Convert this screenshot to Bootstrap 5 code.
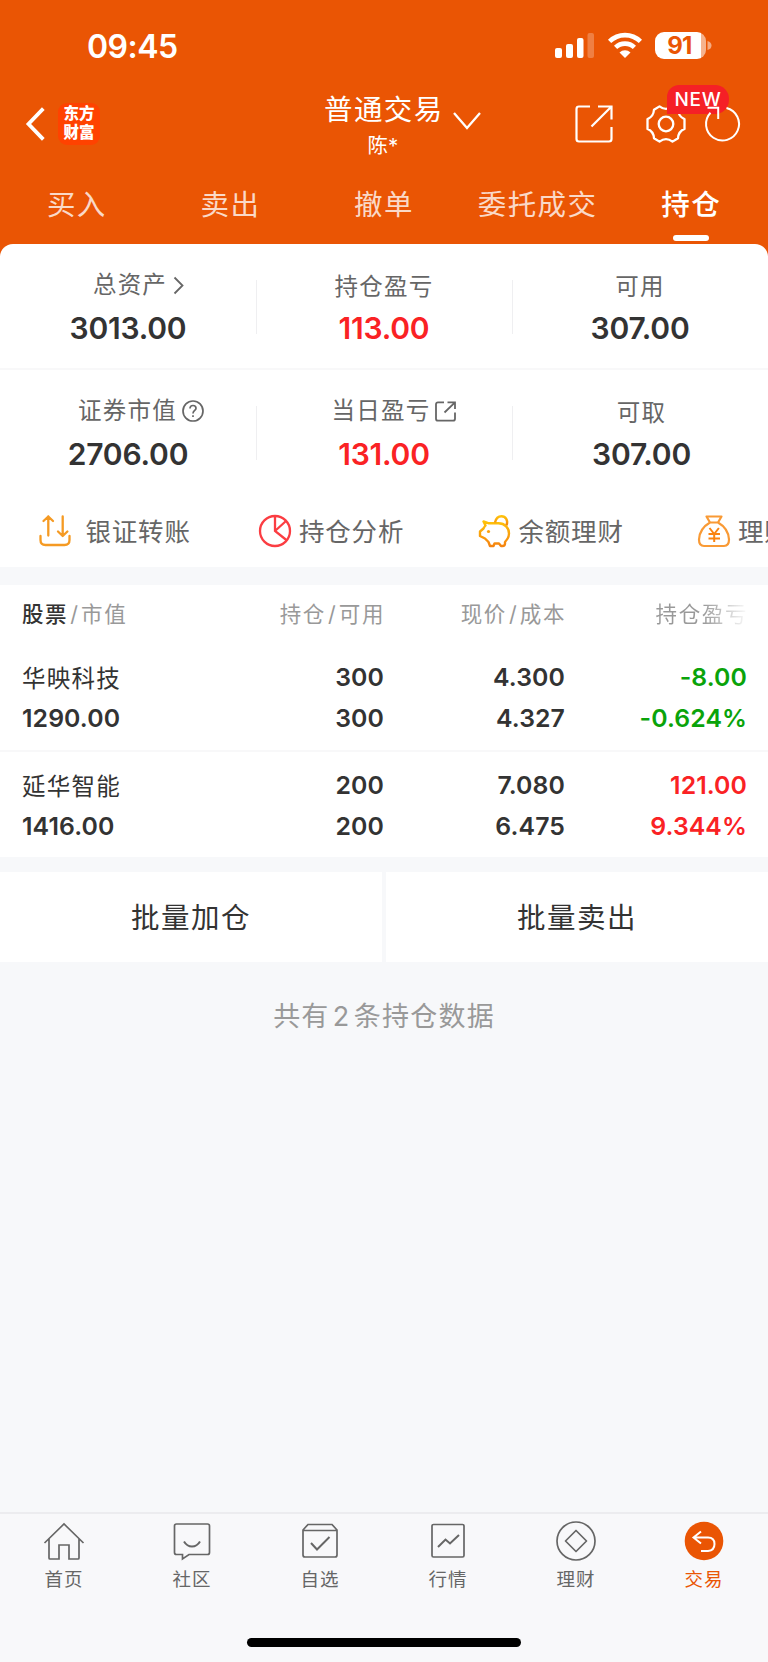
<!DOCTYPE html>
<html lang="zh-CN">
<head>
<meta charset="utf-8">
<meta name="viewport" content="width=device-width, initial-scale=1">
<title>持仓</title>
<link rel="stylesheet" href="https://cdn.jsdelivr.net/npm/bootstrap@5.3.0/dist/css/bootstrap.min.css">
<style>
:root{--brand:#ea5504;--ink:#333;--gray:#666;--mute:#999;--up:#fa2224;--down:#0aa30a;--bg:#f7f8fa}
html,body{height:1662px;overflow:hidden}
body{font-family:Inter,"Noto Sans CJK SC",sans-serif;background:var(--bg);color:var(--ink);width:768px}
svg{display:block;flex:none;fill:none;overflow:visible}
.app{height:1662px}
.top{background:var(--brand);height:256px;color:#fff}
.status{height:86px;padding:5px 55px 0 87px}
.clock{font-size:32px;font-weight:600;letter-spacing:-.5px;line-height:1;padding-top:2px}
.batt{width:51px;height:27px;border-radius:9px;background:linear-gradient(90deg,#fff 46px,#ffffff8c 46px);color:var(--brand);font-size:24px;font-weight:700;line-height:28px;letter-spacing:-.8px;padding-right:2px}
.titlebar{height:76px;padding:0 28px 0 26px}
.logo{width:42px;height:42px;border-radius:9px;background:#ff4200;font-size:15.5px;font-weight:900;line-height:18.500px;margin-left:14px;padding-top:2px}
.title{width:118px;margin-left:224px}
.t1{font-size:28.5px;letter-spacing:1.4px;line-height:36px;white-space:nowrap;padding-top:6px}
.t2{font-size:20.5px;line-height:30px;padding-top:3px}
.newtag{left:21px;top:-20px;width:62px;height:29px;border-radius:12px 14px 14px 0;background:#f52026;font-size:19px;font-weight:500;line-height:29px;letter-spacing:.7px}
.tabs a{font-size:28.5px;letter-spacing:1.4px;line-height:44px;color:#ffffffc8;text-decoration:none;height:82px;padding-top:21px}
.tabs a.on{color:#fff;font-weight:500}
.tabs a.on::after{content:"";width:36px;height:6px;border-radius:3px;background:#fff;margin-top:8px}
.sheet{background:#fff;border-radius:13px 13px 0 0;margin-top:-12px;height:323px}
.stat{height:126px;border-bottom:2px solid #f8f8f9}
.stat.last{border:0;height:125px}
.cell{height:125px;position:relative}
.cell+.cell::before{content:"";position:absolute;left:0;top:36px;width:1px;height:54px;background:#efeff1}
.lab{font-size:23.5px;letter-spacing:1.2px;color:var(--gray);line-height:34px;height:34px;margin-top:26px}
.lab.ic{margin-top:24px;margin-bottom:8px}
.val{font-size:30px;font-weight:600;line-height:36px;letter-spacing:-.2px;margin-top:6px}
.up{color:var(--up)}.down{color:var(--down)}
.quick{height:72px;overflow:hidden;padding-left:39px}
.quick>div{width:219.5px;flex:none;font-size:25.5px;letter-spacing:.8px;color:var(--gray);white-space:nowrap}
.quick span{padding:2px 0 0 8.500px}
.holdings{background:#fff;margin-top:18px;height:272px}
.line4{padding:0 21px 0 22px;display:grid;grid-template-columns:181px 181px 181px 182px;text-align:right;align-content:start}
.line4>:first-child{text-align:left}
.hd{height:58px;line-height:59px;font-size:21.5px;letter-spacing:1.6px;color:var(--mute)}
.hd span{margin-right:-1px}
.hd i{font-style:normal;margin:0 1.500px 0 2px}
.hd .last{background:linear-gradient(90deg,var(--mute) 138px,#99999900 184px);-webkit-background-clip:text;background-clip:text;color:transparent;white-space:nowrap}
.pos{height:107px;padding-top:14px;font-size:24.8px;font-weight:600;letter-spacing:.1px;line-height:41px}
.pos+.pos{border-top:2px solid #f8f8f9;padding-top:13px}
.nm{font-size:23.5px;font-weight:400;letter-spacing:1.25px;padding-top:1px;height:41px}
.batch{margin-top:15px;height:90px;gap:4px}
.batch a{background:#fff;color:var(--ink);text-decoration:none;font-size:28.5px;letter-spacing:1.5px;padding-top:2px}
.total{font-size:27px;letter-spacing:1.2px;word-spacing:-5.500px;color:var(--mute);line-height:40px;margin-top:35px}
.dock{height:150px;background:#f8f8fa;border-top:2px solid #ececef}
.dock a{color:var(--gray);text-decoration:none;font-size:18.5px;letter-spacing:1px;line-height:26px;padding-top:7px}
.dock a svg{margin-bottom:5px}
.dock a.on{color:var(--brand)}
.homebar{width:274px;height:9px;border-radius:5px;background:#000;margin-bottom:15px}
</style>
</head>
<body>
<div class="app d-flex flex-column">
  <header class="top flex-shrink-0">
    <div class="status d-flex align-items-center">
      <div class="clock me-auto">09:45</div>
      <svg width="40" height="26" viewBox="0 0 40 26"><g fill="#fff"><rect x="0" y="15" width="7" height="10" rx="2"/><rect x="11" y="11" width="7" height="14" rx="2"/><rect x="22" y="5" width="6.5" height="20" rx="2"/><rect x="32.500" y="0" width="6.500" height="25" rx="2" opacity=".25"/></g></svg>
      <svg style="margin:0 13px" width="34" height="25" viewBox="0 0 34 25"><g stroke="#fff" stroke-width="4.600"><path d="M1.600 8.400a22 22 0 0 1 30.800 0"/><path d="M7.600 14.400a13.500 13.500 0 0 1 18.800 0"/></g><path fill="#fff" d="M17 25l-5.500-5.500a8 8 0 0 1 11 0z"/></svg>
      <div class="batt text-center">91</div>
      <svg style="margin-left:3px" width="4" height="9" viewBox="0 0 4 9"><path d="M-1.500 0q4 1 4 4.500t-4 4.500z" fill="#fff" opacity=".5"/></svg>
    </div>
    <div class="titlebar d-flex align-items-center">
      <svg width="18" height="32" viewBox="0 0 18 32"><path d="M16 2L2.500 16 16 30" stroke="#fff" stroke-width="3.800" stroke-linecap="square"/></svg>
      <div class="logo text-center">东方<br>财富</div>
      <div class="title text-center align-self-start"><div class="t1">普通交易</div><div class="t2">陈*</div></div>
      <svg style="margin:-7px 0 0 11px" width="28" height="18" viewBox="0 0 28 18"><path d="M1 1l13 15L27 1" stroke="#fff" stroke-width="2.300"/></svg>
      <svg class="ms-auto" width="38" height="38" viewBox="0 0 38 38"><g stroke="#fff" stroke-width="2.200"><path d="M15 1.500H4Q1.500 1.500 1.500 4V34Q1.500 36.500 4 36.500H34Q36.500 36.500 36.500 34V22"/><path d="M23 1.500H36.500V14.500M36.500 1.500L16.500 21.500"/></g></svg>
      <div class="position-relative" style="margin-left:33px">
        <svg width="40" height="38" viewBox="-20 -19 40 38"><g stroke="#fff" stroke-width="2.300" stroke-linejoin="round"><circle r="7.300"/><path d="M-6.500-18Q0-13 6.500-18L12-14.500Q12.500-7.500 18.500-5V5Q12.500 7.500 12 14.500L6.500 18Q0 13-6.500 18L-12 14.500Q-12.500 7.500-18.500 5V-5Q-12.500-7.500-12-14.500Z" transform="scale(1 .98)"/></g></svg>
        <div class="newtag position-absolute text-center">NEW</div>
      </div>
      <svg class="position-relative" style="margin-left:19px" width="35" height="36" viewBox="-17.500 -18 35 36"><path d="M4-16A16.500 16.500 0 1 1-12-11.300M-15-16.200H-4.300V-5" stroke="#fff" stroke-width="2"/></svg>
    </div>
    <nav class="tabs row g-0 row-cols-5">
      <a class="col d-flex flex-column align-items-center">买入</a><a class="col d-flex flex-column align-items-center">卖出</a><a class="col d-flex flex-column align-items-center">撤单</a><a class="col d-flex flex-column align-items-center">委托成交</a><a class="on col d-flex flex-column align-items-center">持仓</a>
    </nav>
  </header>
  <section class="sheet flex-shrink-0">
    <div class="stat row g-0 row-cols-3 text-center">
      <div class="cell col"><div class="lab ic d-flex justify-content-center align-items-center" style="padding-left:29px">总资产<svg style="margin:0 9px 0 7px" width="9" height="17" viewBox="0 0 9 17"><path d="M.5.500l8 8-8 8" stroke="#666" stroke-width="1.800"/></svg></div><div class="val">3013.00</div></div>
      <div class="cell col"><div class="lab">持仓盈亏</div><div class="val up">113.00</div></div>
      <div class="cell col"><div class="lab">可用</div><div class="val">307.00</div></div>
    </div>
    <div class="stat last row g-0 row-cols-3 text-center">
      <div class="cell col"><div class="lab ic d-flex justify-content-center align-items-center" style="padding-left:26px">证券市值<svg style="margin-left:5px" width="22" height="22" viewBox="0 0 22 22"><g stroke="#666" stroke-width="1.700"><circle cx="11" cy="11" r="10"/><path d="M8 8.500Q8 5.500 11 5.500T14 8.300C14 10.500 11 10.500 11 13.500M11 15.200v1.900"/></g></svg></div><div class="val">2706.00</div></div>
      <div class="cell col"><div class="lab ic d-flex justify-content-center align-items-center" style="padding-left:20px">当日盈亏<svg style="margin-left:5px" width="21" height="21" viewBox="0 0 21 21"><path d="M9 1.300H3Q1 1.300 1 3.300V17.700Q1 19.700 3 19.700H18Q20 19.700 20 17.700V11.500M12.500 1.300H20V8M20 1.300L9.500 11.500" stroke="#666" stroke-width="1.800"/></svg></div><div class="val up">131.00</div></div>
      <div class="cell col" style="padding-left:3px"><div class="lab">可取</div><div class="val">307.00</div></div>
    </div>
    <div class="quick d-flex">
      <div class="d-flex align-items-center"><svg width="32" height="32" viewBox="0 0 32 32" stroke="#f59a23" stroke-width="2.300" stroke-linecap="round" stroke-linejoin="round"><path d="M1.500 21v4q0 5 5 5h19q5 0 5-5v-4M9.300 20.500V1.500M4.500 6l4.800-4.500L14 6M23.700 1.500v19M19 16.500l4.700 4.500 4.700-4.500"/></svg><span class="ms-2" style="margin-right:-8px;transform:translateX(-2px)">银证转账</span></div>
      <div class="d-flex align-items-center"><svg width="32" height="32" viewBox="0 0 32 32" stroke="#fb3d42" stroke-width="2.300"><circle cx="16" cy="16" r="15"/><path d="M16 1v15l12 9.500M16 16L27 6"/></svg><span>持仓分析</span></div>
      <div class="d-flex align-items-center"><svg width="32" height="32" viewBox="0 0 32 32" stroke="url(#gold)" stroke-width="2.400" stroke-linejoin="round"><defs><linearGradient id="gold" x2="0" y2="1"><stop stop-color="#ffc20a"/><stop offset="1" stop-color="#f58410"/></linearGradient></defs><path d="M5.500 6.500l5.500 1.800h9.500C27 8.300 31 13 31 18.500q0 4.500-4 8.500v1.500q0 2.500-2.500 2.500h-1.500l-2-2.500h-4.500l-1 2.500h-3.500l-1.500-4-3.500-3.500-5-2.500v-4.500l3.500-3q1-2 2-3z"/><path d="M17 7.500C18 3 20 1.200 23.500 1.200c4 0 7 4 5 9"/><circle cx="10.500" cy="16.500" r="1.600" fill="#fca311" stroke="none"/></svg><span>余额理财</span></div>
      <div class="d-flex align-items-center"><svg width="32" height="32" viewBox="0 0 32 32" stroke="#f99a35" stroke-width="2.200" stroke-linejoin="round"><path d="M8.500 1.500h15l-3.500 6q10.500 6 11 17 0 6.500-5 6.500H6q-5 0-5-6.500 .5-11 11-17zM12 7.500h8"/><path d="M11.500 13l4.700 6 4.700-6M16.200 19v8M10.500 19h11.500M10.500 23.500h11.500" stroke="#fa8411" stroke-width="2"/></svg><span>理财</span></div>
    </div>
  </section>
  <section class="holdings flex-shrink-0">
    <div class="line4 hd"><div><b class="fw-medium" style="color:#333">股票</b><i>/</i>市值</div><span>持仓<i>/</i>可用</span><span>现价<i>/</i>成本</span><span class="last">持仓盈亏</span></div>
    <div class="line4 pos"><div class="nm">华映科技</div><div>300</div><div>4.300</div><div class="down">-8.00</div><div class="text-start">1290.00</div><div>300</div><div>4.327</div><div class="down">-0.624%</div></div>
    <div class="line4 pos"><div class="nm">延华智能</div><div>200</div><div>7.080</div><div class="up">121.00</div><div class="text-start">1416.00</div><div>200</div><div>6.475</div><div class="up">9.344%</div></div>
  </section>
  <div class="batch d-flex flex-shrink-0"><a class="flex-fill w-50 d-flex align-items-center justify-content-center">批量加仓</a><a class="flex-fill w-50 d-flex align-items-center justify-content-center">批量卖出</a></div>
  <div class="total text-center">共有 2 条持仓数据</div>
  <footer class="dock mt-auto d-flex flex-column align-items-center flex-shrink-0">
    <nav class="row g-0 row-cols-6 w-100 mb-auto">
      <a class="col d-flex flex-column align-items-center"><svg width="40" height="40" viewBox="0 0 40 40" stroke="#666" stroke-width="1.700"><path d="M.5 22L20 3l19.500 19M5 18v19q0 1 1 1h9V24h10v14h9q1 0 1-1V18"/></svg>首页</a>
      <a class="col d-flex flex-column align-items-center"><svg width="40" height="40" viewBox="0 0 40 40" stroke="#666" stroke-width="1.700"><path d="M4.500 3h31q2 0 2 2v26.500q0 2-2 2H17L10.500 38v-4.500h-6q-2 0-2-2V5q0-2 2-2z"/><path d="M12 20.500q3 5 8 5t8-5" stroke-width="2"/></svg>社区</a>
      <a class="col d-flex flex-column align-items-center"><svg width="40" height="40" viewBox="0 0 40 40" stroke="#666" stroke-width="1.700"><path d="M3 9l5-5.500h24L37 9v25q0 2-2 2H5q-2 0-2-2zM3 9.500h34"/><path d="M11 22l6 6.500L29.500 16" stroke-width="2"/></svg>自选</a>
      <a class="col d-flex flex-column align-items-center"><svg width="40" height="40" viewBox="0 0 40 40" stroke="#666" stroke-width="1.700"><rect x="4" y="3.500" width="32" height="32.500" rx="1.500"/><path d="M10 26l7.500-7.500 4.500 4L31 14" stroke-width="2"/></svg>行情</a>
      <a class="col d-flex flex-column align-items-center"><svg width="40" height="40" viewBox="0 0 40 40" stroke="#666" stroke-width="1.700"><circle cx="20" cy="20" r="19"/><path d="M20 9.500L30.500 20 20 30.500 9.500 20z" stroke-linejoin="round"/></svg>理财</a>
      <a class="on col d-flex flex-column align-items-center"><svg width="40" height="40" viewBox="0 0 40 40"><circle cx="20" cy="20" r="19.300" fill="#ea5504"/><path d="M17 10.500l-7.500 6 7.500 6M10 16.500h14q6.500 0 6.500 6.500T24 30h-7" stroke="#fff" stroke-width="2"/></svg>交易</a>
    </nav>
    <div class="homebar"></div>
  </footer>
</div>
<script src="https://cdn.jsdelivr.net/npm/bootstrap@5.3.0/dist/js/bootstrap.bundle.min.js"></script>
</body>
</html>
